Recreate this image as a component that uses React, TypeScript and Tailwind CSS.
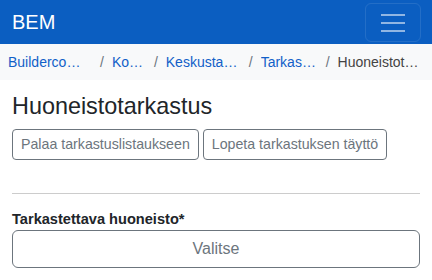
export default function App() {
  const crumbs = [
    { t: "Buildercompany Oy", w: 84 },
    { t: "Kohde", w: 34 },
    { t: "Keskustan asunnot", w: 75 },
    { t: "Tarkastukset", w: 57 },
  ];
  return (
    <div className="w-[432px] h-[280px] bg-white overflow-hidden" style={{ fontFamily: '"Liberation Sans", Arial, sans-serif' }}>
      <nav className="h-[44px] bg-[#0b5ec1] flex items-center justify-between pl-3 pr-[11px]">
        <span className="text-white text-[20px] leading-none">BEM</span>
        <button className="w-[56px] h-[39px] border border-white/10 rounded-[6px] flex items-center justify-center">
          <svg width="24" height="19" viewBox="0 0 24 19">
            <rect x="0" y="1" width="24" height="2" fill="rgba(255,255,255,0.55)" />
            <rect x="0" y="9" width="24" height="2" fill="rgba(255,255,255,0.55)" />
            <rect x="0" y="17" width="24" height="2" fill="rgba(255,255,255,0.55)" />
          </svg>
        </button>
      </nav>
      <div className="h-[36px] bg-[#f8f9fa] px-2 flex items-center text-[14px] whitespace-nowrap">
        {crumbs.map((c, i) => (
          <div key={i} className="flex items-center">
            {i > 0 && <span className="px-2 text-[#6c757d]">/</span>}
            <a className="block truncate text-[#1160c8]" style={{ width: c.w }}>{c.t}</a>
          </div>
        ))}
        <span className="px-2 text-[#6c757d]">/</span>
        <span className="block truncate text-[#444444] w-[82px]">Huoneistotarkastus</span>
      </div>
      <div className="px-3">
        <h1 className="mt-[12px] mb-[9px] text-[23.4px] leading-[1.2] text-[#212529]">Huoneistotarkastus</h1>
        <div className="flex gap-[4px]">
          <button className="h-[31px] px-2 border border-[#6c757d] rounded-[4px] text-[14.2px] text-[#6c757d]">Palaa tarkastuslistaukseen</button>
          <button className="h-[31px] px-2 border border-[#6c757d] rounded-[4px] text-[14.2px] text-[#6c757d]">Lopeta tarkastuksen täyttö</button>
        </div>
        <hr className="mt-[33px] mb-[15px] border-t border-[#cccccc]" />
        <label className="block text-[14.6px] leading-[21px] font-bold text-[#212529]">Tarkastettava huoneisto*</label>
        <div className="h-[38px] border border-[#6c757d] rounded-[6px] flex items-center justify-center text-[16px] text-[#6c757d]">Valitse</div>
      </div>
    </div>
  );
}
